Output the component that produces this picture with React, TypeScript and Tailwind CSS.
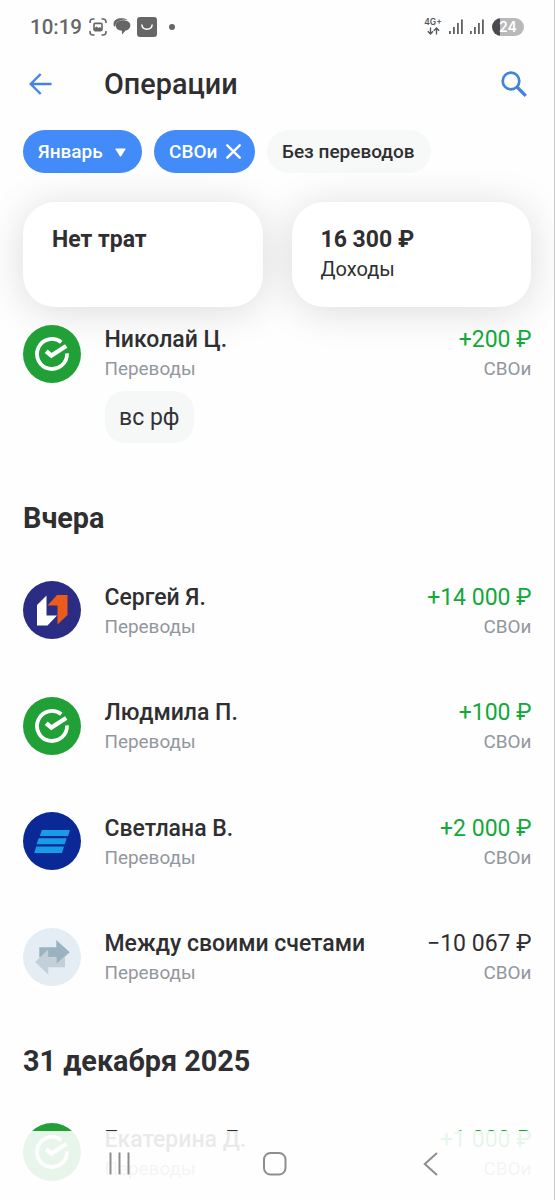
import React from 'react';
import clsx from 'clsx';

type BankKind = 'sber' | 'psb' | 'vtb' | 'self';

interface Operation {
  name: string;
  amount: string;
  bank: BankKind;
  income: boolean;
}

const yesterday: Operation[] = [
  { name: 'Сергей Я.', amount: '+14 000 ₽', bank: 'psb', income: true },
  { name: 'Людмила П.', amount: '+100 ₽', bank: 'sber', income: true },
  { name: 'Светлана В.', amount: '+2 000 ₽', bank: 'vtb', income: true },
  { name: 'Между своими счетами', amount: '−10 067 ₽', bank: 'self', income: false },
];

const BankIcon: React.FC<{ kind: BankKind }> = ({ kind }) => (
  <svg viewBox="0 0 58 58" className="h-[58px] w-[58px] shrink-0">
    {kind === 'sber' && (
      <>
        <circle cx="29" cy="29" r="29" fill="#21a038" />
        <path d="M38.3 17.2A15 15 0 1 0 44 28.4" fill="none" stroke="#fff" strokeWidth="3.8" />
        <path d="M23.2 26.2L28.4 30.6L43.2 21" fill="none" stroke="#fff" strokeWidth="4.4" />
      </>
    )}
    {kind === 'psb' && (
      <>
        <circle cx="29" cy="29" r="29" fill="#2b2d84" />
        <path d="M14 24L23.500 14.500V34.500H34L24.500 44.500H14Z" fill="#fff" />
        <path d="M34 14H44.500V34L34.500 43.500V24.500H24.500Z" fill="#ea5b1c" />
      </>
    )}
    {kind === 'vtb' && (
      <>
        <circle cx="29" cy="29" r="29" fill="#0a2896" />
        <path d="M18.8 18H47L45 24H16.8ZM15.6 26.3H43.7L41.7 32.3H13.6ZM13.2 34.6H41L39 41H11.2Z" fill="#1a9be6" />
      </>
    )}
    {kind === 'self' && (
      <>
        <circle cx="29" cy="29" r="29" fill="#e4ecf4" />
        <path d="M16.3 19.3H33.3V12L46.7 24.2L33.3 36.3V29.3H16.3Z" fill="#9bb2c0" />
        <path d="M25.2 21.5V29.3H33.3V36.3L41 29.3H42V39.2H25.2V46.5L12 34Z" fill="#c3d0da" />
      </>
    )}
  </svg>
);

interface OperationRowProps {
  operation: Operation;
  raised?: boolean;
  note?: string;
}

const OperationRow: React.FC<OperationRowProps> = ({ operation, raised, note }) => (
  <div className="flex items-start">
    <BankIcon kind={operation.bank} />
    <div className={clsx('ml-[23.5px] flex-1', raised ? 'pt-px' : 'pt-[2.4px]')}>
      <div className="flex justify-between text-[23px] leading-7">
        <span className="font-medium text-[#2f2f31]">{operation.name}</span>
        <span className={operation.income ? 'text-[#13a83a]' : 'text-[#2f2f31]'}>{operation.amount}</span>
      </div>
      <div className="mt-[3.2px] flex justify-between text-[18.9px] leading-6 text-[#92979d]">
        <span>Переводы</span>
        <span>СВОи</span>
      </div>
      {note && (
        <div className="mt-[9.8px] flex h-[52px] w-[89.5px] items-center justify-center rounded-[20px] bg-[#f6f8f8] pt-0.5 text-[23px] text-[#333335]">
          {note}
        </div>
      )}
    </div>
  </div>
);

const Signal = () => (
  <svg viewBox="0 0 15 16" className="h-4 w-[15px]" fill="#606060">
    <path d="M0 12h1.800v3H0zM4 8h1.800v7H4zM8 4h1.800v11H8zM12 0.5h1.800v14.5h-1.800z" />
  </svg>
);

const StatusBar = () => (
  <div className="flex h-[53px] items-center pr-[30px] pl-[30px] text-[#666]">
    <span className="w-[50px] pt-px text-[20.5px] font-medium">10:19</span>
    <svg viewBox="0 0 18 18" className="ml-[9px] h-[18px] w-[18px]" fill="none" stroke="#666" strokeWidth="1.6">
      <path d="M1 5V4a3 3 0 0 1 3-3h1.500M12.500 1h1.500a3 3 0 0 1 3 3v1M17 13v1a3 3 0 0 1-3 3h-1.500M5.500 17H4a3 3 0 0 1-3-3v-1" />
      <rect x="5" y="5.400" width="8" height="7.200" rx="1" />
      <path d="M5 12V10.500L7.500 8.500L9.500 10L11 9L13 10.500V12.500H5Z" fill="#666" stroke="none" />
    </svg>
    <svg viewBox="0 0 18 16" className="ml-[6px] h-[17px] w-[19px]" fill="#666">
      <path d="M1 8C-.8 3 3 .3 8 .3c2.500 0 4.500.6 6 1.700C8 .8 2.500 2.500 2.200 7.800z" />
      <path d="M9.300 2c4.500 0 7.200 2 7.200 5 0 2.500-2 4.300-4.500 4.800L8.500 15.500V12C5 11.800 2.600 9.800 2.600 7c0-3 2.700-5 6.700-5z" />
    </svg>
    <svg viewBox="0 0 20 20" className="ml-[5px] h-5 w-5">
      <rect width="20" height="20" rx="3" fill="#666" />
      <path d="M4.800 7.500C5.200 13.700 14.800 13.700 15.200 7.500" fill="none" stroke="#fff" strokeWidth="1.500" />
    </svg>
    <span className="ml-[12px] h-1.5 w-1.5 rounded-full bg-[#666]" />
    <div className="ml-auto flex items-center">
      <div className="flex w-[18px] flex-col items-center">
        <span className="font-['Inter',sans-serif] text-[8.5px] leading-[9px] font-semibold text-[#555]">4G+</span>
        <svg viewBox="0 0 13 8" className="h-2 w-[13px]" fill="none" stroke="#555" strokeWidth="1.300">
          <path d="M3.500 .5V7M.8 4.300L3.500 7L6 4.300M9.500 7.500V1M6.800 3.700L9.500 1L12.200 3.700" />
        </svg>
      </div>
      <div className="ml-[7px] flex gap-[6px]">
        <Signal />
        <Signal />
      </div>
      <div className="ml-[7px] flex h-[18px] w-[32px] items-center justify-center rounded-full bg-[linear-gradient(to_right,#4a4a4a_8px,#b9b9b9_8px)] font-['Inter',sans-serif] text-[14px] font-semibold text-white">
        24
      </div>
    </div>
  </div>
);

const chip = 'flex h-[43px] items-center rounded-full text-[19px] font-medium';
const card = 'h-[105px] flex-1 rounded-[32px] bg-white px-[29px] pt-6 text-[#2f2f31] shadow-[0_4px_42px_rgba(0,0,0,0.14)]';

export default function App() {
  return (
    <div className="relative h-[1200px] w-[555px] overflow-hidden border-r border-[#c9c9c9] bg-[#fefefe] font-['Roboto',sans-serif]">
      <StatusBar />

      <header className="flex h-[62px] items-center pr-[27px] pl-[29px]">
        <svg viewBox="0 0 23 22" className="h-[22px] w-[23px]" fill="none" stroke="#4184e4" strokeWidth="2.400">
          <path d="M22.500 11H1.700M11.700 1L1.700 11L11.700 21" />
        </svg>
        <h1 className="ml-[52px] pt-0.5 text-[28.8px] font-medium text-[#2f2f31]">Операции</h1>
        <svg viewBox="0 0 26 26" className="ml-auto h-[26px] w-[26px]" fill="none" stroke="#4184d8" strokeWidth="2.700">
          <circle cx="10" cy="10" r="8.300" />
          <path d="M16 16L24.800 24.800" strokeWidth="3.200" />
        </svg>
      </header>

      <div className="mt-[15px] flex gap-3 pl-[23px]">
        <div className={clsx(chip, 'w-[119px] bg-[#428bf9] pl-[15px] text-white')}>
          <span className="pt-0.5">Январь</span>
          <svg viewBox="0 0 11 9" className="mt-0.5 ml-3 h-[9px] w-[11px]" fill="#fff">
            <path d="M1 .5H10Q11 .5 10.400 1.500L6.300 8Q5.500 9 4.700 8L.6 1.500Q0 .5 1 .5Z" />
          </svg>
        </div>
        <div className={clsx(chip, 'w-[101px] bg-[#428bf9] pl-[15px] text-white')}>
          <span className="pt-0.5">СВОи</span>
          <svg viewBox="0 0 15 15" className="ml-[9px] h-[15px] w-[15px]" fill="none" stroke="#fff" strokeWidth="2.400" strokeLinecap="round">
            <path d="M1.300 1.300L13.700 13.700M13.700 1.300L1.300 13.700" />
          </svg>
        </div>
        <div className={clsx(chip, 'w-[164px] bg-[#f7f8f8] pt-0.5 pl-[15px] text-[#2f2f31]')}>Без переводов</div>
      </div>

      <div className="mt-[29px] flex gap-[29px] pr-[23px] pl-[23px]">
        <div className={card}>
          <div className="text-[23px] leading-7 font-bold">Нет трат</div>
        </div>
        <div className={card}>
          <div className="text-[23px] leading-7 font-bold">16 300 ₽</div>
          <div className="mt-[3px] text-[20px] leading-6">Доходы</div>
        </div>
      </div>

      <main className="relative mt-[18px] pr-[22.5px] pl-[23px]">
        <OperationRow
          operation={{ name: 'Николай Ц.', amount: '+200 ₽', bank: 'sber', income: true }}
          note="вс рф"
          raised
        />
        <h2 className="mt-[57px] text-[28.8px] leading-9 font-bold text-[#2f2f31]">Вчера</h2>
        <div className="mt-[45.4px] flex flex-col gap-[57.5px]">
          {yesterday.map((operation) => (
            <OperationRow key={operation.name} operation={operation} />
          ))}
        </div>
        <h2 className="mt-[57.2px] text-[28.8px] leading-9 font-bold text-[#2f2f31]">31 декабря 2025</h2>
        <div className="mt-[44.2px]">
          <OperationRow operation={{ name: 'Екатерина Д.', amount: '+1 000 ₽', bank: 'sber', income: true }} />
        </div>
      </main>

      {/* translucent system navigation over the list */}
      <nav className="absolute inset-x-0 bottom-0 flex h-[69px] items-start bg-[#fefefe]/90 pt-[21px] pl-[109px]">
        <svg viewBox="0 0 22 23" className="h-[23px] w-[22px]" fill="none" stroke="#8d8d8d" strokeWidth="2">
          <path d="M1.500 .5V22.500M10.500 .5V22.500M19.500 .5V22.500" />
        </svg>
        <svg viewBox="0 0 24 24" className="ml-[132px] h-6 w-6" fill="none" stroke="#8d8d8d" strokeWidth="2">
          <rect x="1" y="1" width="21.500" height="21.500" rx="6.500" />
        </svg>
        <svg viewBox="0 0 15 24" className="ml-[136px] h-6 w-[15px]" fill="none" stroke="#8d8d8d" strokeWidth="2">
          <path d="M14 1L1.800 12L14 23" />
        </svg>
      </nav>
    </div>
  );
}
